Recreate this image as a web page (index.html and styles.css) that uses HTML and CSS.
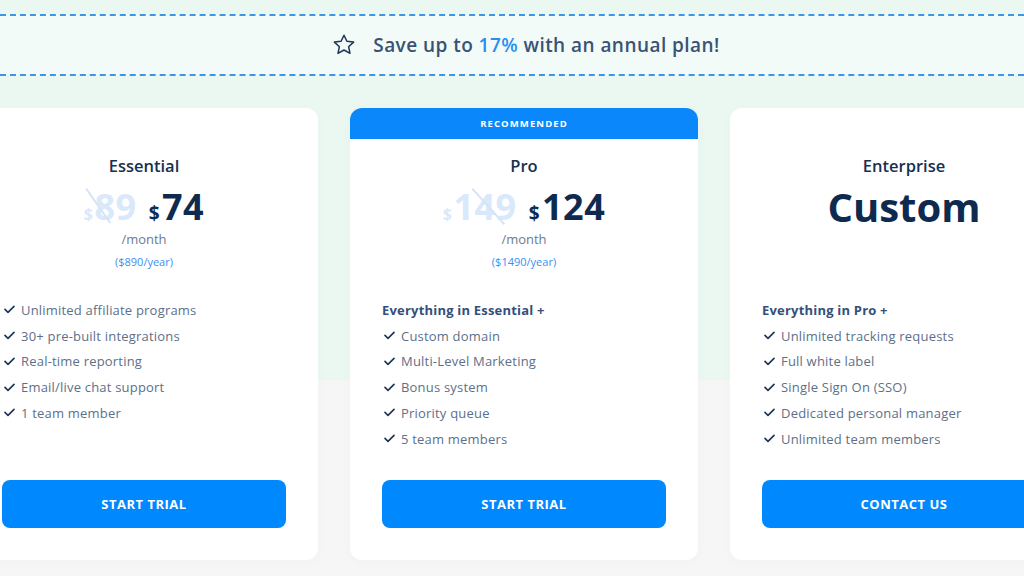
FILE: index.html
```html
<!DOCTYPE html>
<html>
<head>
<meta charset="utf-8">
<link rel="stylesheet" href="styles.css">
</head>
<body>
<div class="page">
  <div class="banner">
    <svg class="star" viewBox="0 0 24 24" width="24" height="24"><path d="M12 2.2l2.9 6.1 6.7.8-5 4.6 1.4 6.6L12 17 6 20.3l1.4-6.6-5-4.6 6.7-.8z" fill="none" stroke="#1d3456" stroke-width="1.5" stroke-linejoin="round"/></svg>
    <span class="banner-text">Save up to <span class="accent">17%</span> with an annual plan!</span>
  </div>
  <div class="cards">
    <div class="card plain">
      <div class="card-body">
        <div class="title">Essential</div>
        <div class="price-row">
          <span class="old"><span class="cur">$</span>89<span class="strike s1"></span></span>
          <span class="new"><span class="cur">$</span>74</span>
        </div>
        <div class="per">/month</div>
        <div class="year">($890/year)</div>
        <ul class="features">
          <li><svg class="chk" viewBox="0 0 11 9"><path d="M1 4.4l3 3 6-6"/></svg>Unlimited affiliate programs</li>
          <li><svg class="chk" viewBox="0 0 11 9"><path d="M1 4.4l3 3 6-6"/></svg>30+ pre-built integrations</li>
          <li><svg class="chk" viewBox="0 0 11 9"><path d="M1 4.4l3 3 6-6"/></svg>Real-time reporting</li>
          <li><svg class="chk" viewBox="0 0 11 9"><path d="M1 4.4l3 3 6-6"/></svg>Email/live chat support</li>
          <li><svg class="chk" viewBox="0 0 11 9"><path d="M1 4.4l3 3 6-6"/></svg>1 team member</li>
        </ul>
        <a class="btn">START TRIAL</a>
      </div>
    </div>
    <div class="card">
      <div class="rec">RECOMMENDED</div>
      <div class="card-body">
        <div class="title">Pro</div>
        <div class="price-row">
          <span class="old"><span class="cur">$</span>149<span class="strike s2"></span></span>
          <span class="new"><span class="cur">$</span>124</span>
        </div>
        <div class="per">/month</div>
        <div class="year">($1490/year)</div>
        <ul class="features">
          <li class="head">Everything in Essential +</li>
          <li><svg class="chk" viewBox="0 0 11 9"><path d="M1 4.4l3 3 6-6"/></svg>Custom domain</li>
          <li><svg class="chk" viewBox="0 0 11 9"><path d="M1 4.4l3 3 6-6"/></svg>Multi-Level Marketing</li>
          <li><svg class="chk" viewBox="0 0 11 9"><path d="M1 4.4l3 3 6-6"/></svg>Bonus system</li>
          <li><svg class="chk" viewBox="0 0 11 9"><path d="M1 4.4l3 3 6-6"/></svg>Priority queue</li>
          <li><svg class="chk" viewBox="0 0 11 9"><path d="M1 4.4l3 3 6-6"/></svg>5 team members</li>
        </ul>
        <a class="btn">START TRIAL</a>
      </div>
    </div>
    <div class="card plain">
      <div class="card-body">
        <div class="title">Enterprise</div>
        <div class="custom">Custom</div>
        <ul class="features ent">
          <li class="head">Everything in Pro +</li>
          <li><svg class="chk" viewBox="0 0 11 9"><path d="M1 4.4l3 3 6-6"/></svg>Unlimited tracking requests</li>
          <li><svg class="chk" viewBox="0 0 11 9"><path d="M1 4.4l3 3 6-6"/></svg>Full white label</li>
          <li><svg class="chk" viewBox="0 0 11 9"><path d="M1 4.4l3 3 6-6"/></svg>Single Sign On (SSO)</li>
          <li><svg class="chk" viewBox="0 0 11 9"><path d="M1 4.4l3 3 6-6"/></svg>Dedicated personal manager</li>
          <li><svg class="chk" viewBox="0 0 11 9"><path d="M1 4.4l3 3 6-6"/></svg>Unlimited team members</li>
        </ul>
        <a class="btn">CONTACT US</a>
      </div>
    </div>
  </div>
</div>
</body>
</html>
```
FILE: styles.css
```css
* { box-sizing: border-box; }
html, body { margin: 0; padding: 0; }
body {
  width: 1024px;
  height: 576px;
  overflow: hidden;
  font-family: "Open Sans", "Liberation Sans", sans-serif;
  background: linear-gradient(to bottom, #ebf8f1 0, #ebf8f1 380px, #f6f6f6 380px, #f6f6f6 100%);
}
.page { padding-top: 14px; }
.banner {
  height: 62px;
  border-top: 2px dashed #3d95ea;
  border-bottom: 2px dashed #3d95ea;
  background: #f2fbf7;
  display: flex;
  align-items: center;
  justify-content: center;
  gap: 17px;
  padding-left: 28px;
}
.star { display: block; margin-top: -1px; }
.banner-text {
  font-size: 19px;
  font-weight: 600;
  color: #3a5273;
  letter-spacing: 0.45px;
}
.accent { color: #2a8ef0; }
.cards {
  display: flex;
  gap: 32px;
  margin-top: 32px;
  margin-left: -30px;
}
.card {
  flex: 0 0 348px;
  height: 452px;
  background: #fff;
  border-radius: 12px;
  display: flex;
  flex-direction: column;
  box-shadow: 0 2px 12px rgba(0, 0, 0, 0.025);
}
.card.plain { padding-top: 31px; }
.rec {
  height: 31px;
  background: #0a88fb;
  border-radius: 12px 12px 0 0;
  color: #fff;
  font-size: 9.5px;
  font-weight: 700;
  letter-spacing: 1.1px;
  text-align: center;
  line-height: 31px;
}
.card-body {
  flex: 1;
  display: flex;
  flex-direction: column;
  align-items: center;
  padding: 17px 32px 32px;
}
.title {
  font-size: 16.5px;
  line-height: 20px;
  font-weight: 600;
  color: #17304f;
}
.price-row {
  margin-top: 11px;
  height: 40px;
  display: flex;
  align-items: baseline;
  gap: 12px;
  font-size: 36px;
  line-height: 40px;
  font-weight: 700;
  letter-spacing: 0.5px;
}
.cur { font-size: 19px; margin-right: 2px; }
.old { position: relative; color: #dae8fb; }
.old .cur { font-size: 16px; margin-right: 1px; }
.new { color: #0e2b4f; }
.strike {
  position: absolute;
  top: 1px;
  height: 2px;
  background: #d4e4f8;
  transform-origin: 0 0;
}
.strike.s1 { left: 3px; width: 42px; transform: rotate(55deg); }
.strike.s2 { left: 30px; width: 48px; transform: rotate(48deg); }
.per {
  margin-top: 3px;
  font-size: 13px;
  line-height: 18px;
  color: #6b7b8f;
}
.year {
  margin-top: 6px;
  font-size: 11px;
  line-height: 16px;
  color: #3c8ff0;
}
.custom {
  margin-top: 11px;
  height: 40px;
  font-size: 40px;
  line-height: 40px;
  font-weight: 700;
  color: #0e2b4f;
}
.features {
  list-style: none;
  margin: 27px 0 0;
  padding: 0;
  align-self: stretch;
}
.features.ent { margin-top: 70px; }
.features li {
  display: flex;
  align-items: center;
  height: 25.75px;
  font-size: 13px;
  letter-spacing: 0.2px;
  color: #5d708a;
  padding-left: 2px;
}
.features li.head {
  padding-left: 0;
  font-weight: 700;
  color: #34507a;
}
.chk {
  width: 11px;
  height: 9px;
  margin-right: 6px;
  fill: none;
  stroke: #1d3456;
  stroke-width: 1.6;
  stroke-linecap: round;
  stroke-linejoin: round;
  flex: none;
}
.btn {
  margin-top: auto;
  align-self: stretch;
  height: 48px;
  background: #0088ff;
  border-radius: 8px;
  color: #fff;
  font-size: 13px;
  font-weight: 700;
  letter-spacing: 0.5px;
  display: flex;
  align-items: center;
  justify-content: center;
}
```
